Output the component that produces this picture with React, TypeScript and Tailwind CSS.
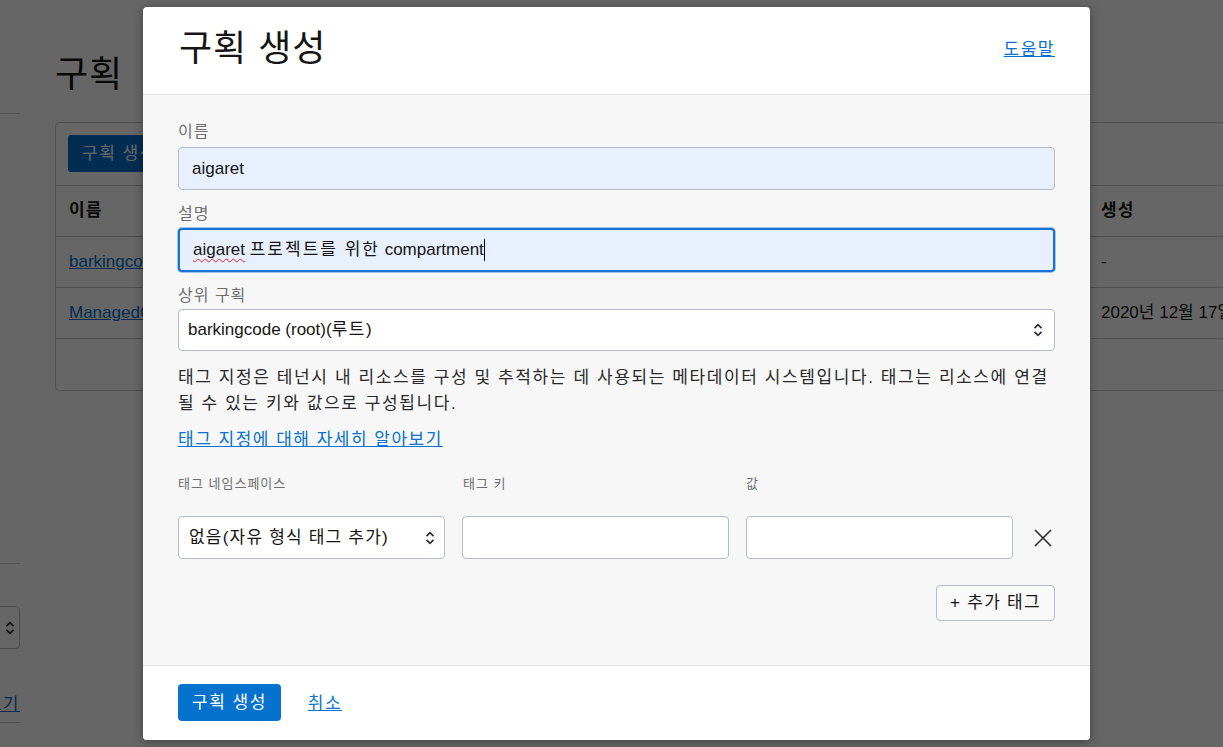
import { ReactNode } from 'react';

const font = "font-['Liberation_Sans','Noto_Sans_CJK_KR',sans-serif]";

const Chevrons = () => (
  <svg width="10" height="16" viewBox="0 0 10 16" fill="none">
    <path d="M1.5 6.2 L5 2.7 L8.5 6.2" stroke="#2d2d2d" strokeWidth="1.7" />
    <path d="M1.5 9.8 L5 13.3 L8.5 9.8" stroke="#2d2d2d" strokeWidth="1.7" />
  </svg>
);

const Label = ({ children, className = '' }: { children: ReactNode; className?: string }) => (
  <div className={`h-[22px] leading-[22px] text-[16px] tracking-[1px] text-[#6f6f6f] ${className}`}>{children}</div>
);

const BackgroundPage = () => (
  <div className="flex w-[1223px] h-[747px] bg-white text-[#161513]">
    {/* left nav, mostly scrolled out of view */}
    <div className="w-[20px] shrink-0 flex flex-col">
      <div className="h-[114px] border-b border-[#d0d0d0]" />
      <div className="h-[450px] border-b border-[#d0d0d0]" />
      <div className="flex justify-end mt-[42px]">
        <div className="w-[200px] shrink-0 h-[43px] border border-[#b8bec6] rounded-[4px] flex items-center justify-end pr-[4px]">
          <Chevrons />
        </div>
      </div>
      <div className="flex justify-end mt-[43px]">
        <span className="shrink-0 whitespace-nowrap text-[17px] tracking-[1.5px] text-[#0572ce] underline">자세히 알아보기</span>
      </div>
      <div className="mt-[4px] h-[1px] bg-[#d0d0d0]" />
    </div>

    <div className="ml-[35px] flex flex-col shrink-0">
      <h1 className="h-[122px] pt-[52px] text-[36px] tracking-[1px] leading-[46px]">구획</h1>
      <div className="w-[1300px] h-[269px] border border-[#c8c8c8] rounded-[4px] flex flex-col">
        <div className="h-[63px] border-b border-[#c8c8c8] px-[12px] pt-[12px]">
          <div className="h-[37px] w-[110px] bg-[#0572ce] rounded-[3px] text-white text-[17px] tracking-[1.5px] flex items-center px-[14px]">구획 생성</div>
        </div>
        {[
          { name: '이름', created: '생성', bold: true },
          { name: 'barkingcode', created: '-', bold: false },
          { name: 'ManagedCompartmentForPaaS', created: '2020년 12월 17일 오전 10:12:31 UTC', bold: false },
        ].map((r) => (
          <div key={r.name} className="h-[51px] border-b border-[#c8c8c8] flex items-center text-[17px] whitespace-nowrap">
            <span className={`w-[1045px] shrink-0 pl-[13px] ${r.bold ? 'font-bold tracking-[1px]' : 'text-[#0572ce] underline'}`}>{r.name}</span>
            <span className={`shrink-0 ${r.bold ? 'font-bold tracking-[1px]' : ''}`}>{r.created}</span>
          </div>
        ))}
      </div>
    </div>
  </div>
);

const Modal = () => (
  <div className="absolute left-[143px] top-[7px] w-[947px] h-[733px] bg-white rounded-[4px] shadow-[0_2px_10px_rgba(0,0,0,0.35)] flex flex-col overflow-hidden text-[#161513]">
    <div className="h-[88px] shrink-0 border-b border-[#e3e3e3] flex items-center justify-between pl-[36px] pr-[35px] pb-[3px]">
      <h2 className="text-[36px] tracking-[1px] leading-[44px]">구획 생성</h2>
      <a className="text-[17px] tracking-[1.5px] text-[#0572ce] underline mt-[2px]">도움말</a>
    </div>

    <div className="h-[570px] shrink-0 bg-[#f7f7f7] px-[35px] pt-[26px] flex flex-col">
      <Label>이름</Label>
      <div className="mt-[4px] h-[43px] bg-[#e8f0fe] border border-[#b4bcc8] rounded-[4px] flex items-center px-[13px] text-[17px]">
        aigaret
      </div>

      <Label className="mt-[13px]">설명</Label>
      <div className="mt-[3px] h-[44px] bg-[#e8f0fe] border-2 border-[#1b72d0] rounded-[4px] shadow-[0_0_0_1px_#9cc2ee] flex items-center px-[13px] text-[17px]">
        <span className="underline decoration-wavy decoration-[#e02020] decoration-1 underline-offset-[3px]">aigaret</span>
        <span>&nbsp;</span>
        <span className="tracking-[2px]">프로젝트를 위한</span>
        <span>&nbsp;compartment</span>
        <span className="w-[1px] h-[22px] bg-black" />
      </div>

      <Label className="mt-[13px]">상위 구획</Label>
      <div className="mt-[2px] h-[42px] bg-white border border-[#b4bcc8] rounded-[4px] flex items-center justify-between pl-[9px] pr-[11px] text-[17px]">
        <span>barkingcode (root)(<span className="tracking-[1.5px]">루트</span>)</span>
        <Chevrons />
      </div>

      <p className="mt-[14px] text-[17px] leading-[26px] tracking-[1.6px] text-[#2a2a2a] whitespace-nowrap">
        태그 지정은 테넌시 내 리소스를 구성 및 추적하는 데 사용되는 메타데이터 시스템입니다. 태그는 리소스에 연결
        <br />될 수 있는 키와 값으로 구성됩니다.
      </p>

      <a className="mt-[10px] text-[17px] leading-[26px] tracking-[1.5px] text-[#0572ce] underline self-start">태그 지정에 대해 자세히 알아보기</a>

      <div className="mt-[22px] grid grid-cols-[267px_267px_267px_1fr] gap-x-[17px] text-[13px] leading-[18px] tracking-[1px] text-[#6f6f6f]">
        <span>태그 네임스페이스</span>
        <span className="pl-[1px]">태그 키</span>
        <span>값</span>
        <span />
      </div>

      <div className="mt-[23px] grid grid-cols-[267px_267px_267px_1fr] gap-x-[17px] h-[43px]">
        <div className="bg-white border border-[#b4bcc8] rounded-[4px] flex items-center justify-between pl-[10px] pr-[9px] text-[17px]">
          <span className="tracking-[1.2px]">없음(자유 형식 태그 추가)</span>
          <Chevrons />
        </div>
        <div className="bg-white border border-[#b4bcc8] rounded-[4px]" />
        <div className="bg-white border border-[#b4bcc8] rounded-[4px]" />
        <div className="flex items-center justify-end pr-[2px]">
          <svg width="20" height="20" viewBox="0 0 20 20" fill="none">
            <path d="M2 2 L18 18 M18 2 L2 18" stroke="#2a2a2a" strokeWidth="1.6" />
          </svg>
        </div>
      </div>

      <div className="mt-[26px] flex justify-end">
        <button className="h-[36px] px-[13px] bg-[#f9f9f9] border border-[#b4bcc8] rounded-[4px] text-[17px] tracking-[1.3px] text-[#161513]">
          + 추가 태그
        </button>
      </div>
    </div>

    <div className="flex-1 border-t border-[#e3e3e3] bg-white flex items-start pt-[18px] pl-[35px] gap-[27px]">
      <button className="h-[37px] px-[14px] bg-[#0572ce] rounded-[4px] text-white text-[17px] tracking-[1.5px]">구획 생성</button>
      <a className="mt-[7px] text-[17px] tracking-[1.5px] text-[#0572ce] underline">취소</a>
    </div>
  </div>
);

export default function App() {
  return (
    <div className={`relative w-[1223px] h-[747px] overflow-hidden ${font}`}>
      <BackgroundPage />
      <div className="absolute inset-0 bg-black/60" />
      <Modal />
    </div>
  );
}
